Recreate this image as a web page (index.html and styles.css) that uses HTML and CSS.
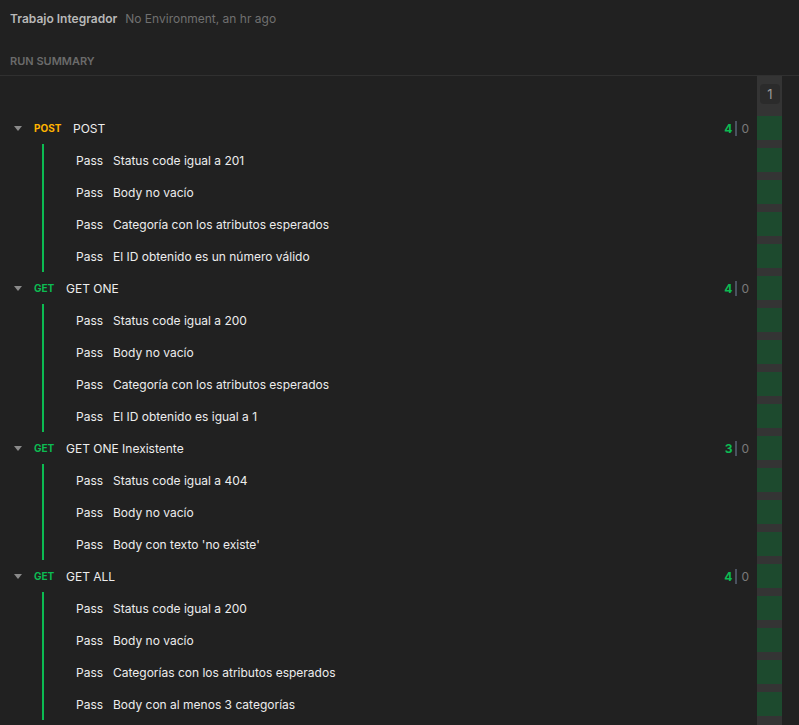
FILE: index.html
```html
<!DOCTYPE html>
<html>
<head>
<meta charset="utf-8">
<link rel="stylesheet" href="styles.css">
</head>
<body>
<div class="top">
  <span class="title">Trabajo Integrador</span>
  <span class="meta">No Environment, an hr ago</span>
</div>
<div class="summary-label">RUN SUMMARY</div>
<div class="main">
  <div class="list">
    <div class="group">
      <div class="req">
        <span class="caret"></span>
        <span class="method post">POST</span>
        <span class="name">POST</span>
        <span class="count"><b>4</b><i></i><em>0</em></span>
      </div>
      <div class="tests">
        <div class="test"><span class="pass">Pass</span><span>Status code igual a 201</span></div>
        <div class="test"><span class="pass">Pass</span><span>Body no vacío</span></div>
        <div class="test"><span class="pass">Pass</span><span>Categoría con los atributos esperados</span></div>
        <div class="test"><span class="pass">Pass</span><span>El ID obtenido es un número válido</span></div>
      </div>
    </div>
    <div class="group">
      <div class="req">
        <span class="caret"></span>
        <span class="method get">GET</span>
        <span class="name">GET ONE</span>
        <span class="count"><b>4</b><i></i><em>0</em></span>
      </div>
      <div class="tests">
        <div class="test"><span class="pass">Pass</span><span>Status code igual a 200</span></div>
        <div class="test"><span class="pass">Pass</span><span>Body no vacío</span></div>
        <div class="test"><span class="pass">Pass</span><span>Categoría con los atributos esperados</span></div>
        <div class="test"><span class="pass">Pass</span><span>El ID obtenido es igual a 1</span></div>
      </div>
    </div>
    <div class="group">
      <div class="req">
        <span class="caret"></span>
        <span class="method get">GET</span>
        <span class="name">GET ONE Inexistente</span>
        <span class="count"><b>3</b><i></i><em>0</em></span>
      </div>
      <div class="tests">
        <div class="test"><span class="pass">Pass</span><span>Status code igual a 404</span></div>
        <div class="test"><span class="pass">Pass</span><span>Body no vacío</span></div>
        <div class="test"><span class="pass">Pass</span><span>Body con texto 'no existe'</span></div>
      </div>
    </div>
    <div class="group">
      <div class="req">
        <span class="caret"></span>
        <span class="method get">GET</span>
        <span class="name">GET ALL</span>
        <span class="count"><b>4</b><i></i><em>0</em></span>
      </div>
      <div class="tests">
        <div class="test"><span class="pass">Pass</span><span>Status code igual a 200</span></div>
        <div class="test"><span class="pass">Pass</span><span>Body no vacío</span></div>
        <div class="test"><span class="pass">Pass</span><span>Categorías con los atributos esperados</span></div>
        <div class="test"><span class="pass">Pass</span><span>Body con al menos 3 categorías</span></div>
      </div>
    </div>
  </div>
  <div class="iter">
    <div class="badge">1</div>
    <div class="cells">
      <div class="cell"></div><div class="cell"></div><div class="cell"></div><div class="cell"></div><div class="cell"></div>
      <div class="cell"></div><div class="cell"></div><div class="cell"></div><div class="cell"></div><div class="cell"></div>
      <div class="cell"></div><div class="cell"></div><div class="cell"></div><div class="cell"></div>
      <div class="cell"></div><div class="cell"></div><div class="cell"></div><div class="cell"></div><div class="cell"></div>
    </div>
  </div>
</div>
</body>
</html>
```
FILE: styles.css
```css
html, body {
  margin: 0;
  padding: 0;
  background: #212121;
  height: 725px;
  overflow: hidden;
}
body {
  font-family: Inter, "Noto Sans", sans-serif;
  font-size: 12px;
  color: #e8e8e8;
}
.top {
  height: 36px;
  display: flex;
  align-items: center;
  padding-left: 10px;
  gap: 8px;
  font-size: 12px;
}
.title {
  font-weight: 600;
  color: #b8b8b8;
}
.meta {
  color: #707070;
}
.summary-label {
  padding: 18px 10px 0;
  height: 21px;
  line-height: 14px;
  font-size: 11px;
  font-weight: 600;
  color: #6b6b6b;
  border-bottom: 1px solid #303030;
}
.main {
  display: flex;
}
.list {
  flex: 1;
  padding-top: 36px;
  padding-right: 8px;
}
.req {
  height: 32px;
  display: flex;
  align-items: center;
}
.caret {
  width: 0;
  height: 0;
  border-left: 4px solid transparent;
  border-right: 4px solid transparent;
  border-top: 5px solid #8a8a8a;
  margin-left: 14px;
  margin-right: 12px;
}
.method {
  font-size: 10px;
  font-weight: 700;
  width: 32px;
}
.method.post { color: #ffb400; width: 39px; }
.method.get { color: #0cbb52; }
.name {
  flex: 1;
  color: #ededed;
}
.count {
  display: flex;
  align-items: center;
  font-size: 12px;
}
.count b {
  color: #0cbb52;
  font-weight: 700;
}
.count i {
  width: 2px;
  height: 15px;
  background: #4a5260;
  margin: 0 4px 0 3px;
}
.count em {
  font-style: normal;
  color: #7a7a7a;
}
.tests {
  margin-left: 42px;
  border-left: 2px solid #0cbb52;
}
.test {
  height: 32px;
  display: flex;
  align-items: center;
  padding-left: 32px;
  color: #ededed;
}
.pass {
  width: 37px;
}
.iter {
  width: 25px;
  margin-right: 17px;
  background: #343434;
  height: 649px;
}
.badge {
  margin: 8px 2px 0 3px;
  height: 20px;
  border-radius: 4px;
  background: #2b2b2b;
  color: #9a9a9a;
  font-size: 13px;
  text-align: center;
  line-height: 20px;
}
.cells {
  margin-top: 8px;
}
.cell {
  height: 24px;
  background: #1d4a2e;
  border-top: 4px solid #343434;
  border-bottom: 4px solid #343434;
}
```
